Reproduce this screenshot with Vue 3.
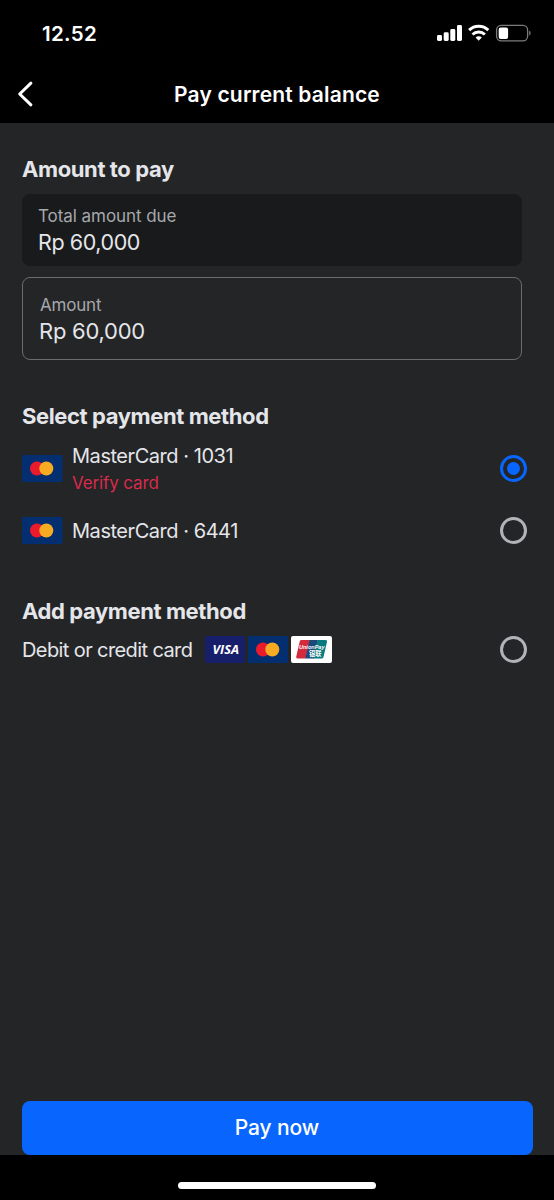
<script setup>
import { ref } from 'vue'

const selected = ref('1031')
const cards = [
  { id: '1031', label: 'MasterCard · 1031', note: 'Verify card' },
  { id: '6441', label: 'MasterCard · 6441', note: '' },
]
</script>

<template>
  <div class="screen">
    <header class="top">
      <div class="status">
        <span class="clock">12.52</span>
        <svg class="status-icons" width="96" height="20" viewBox="0 0 96 20">
          <g fill="#fff">
            <rect x="1" y="11" width="5" height="6" rx="1.4" />
            <rect x="7.7" y="8.3" width="5" height="8.7" rx="1.4" />
            <rect x="14.3" y="5" width="5" height="12" rx="1.4" />
            <rect x="21" y="1" width="5" height="16" rx="1.4" />
            <path d="M42.7 16.7l-3.1-3.1a4.4 4.4 0 0 1 6.2 0z" />
          </g>
          <g fill="none" stroke="#fff" stroke-width="3">
            <path d="M33.1 6.2a13.9 13.9 0 0 1 19.2 0" />
            <path d="M36.5 10.5a9 9 0 0 1 12.4 0" />
          </g>
          <rect x="60.6" y="1.4" width="31" height="15.4" rx="4.6" fill="none" stroke="#7b7b7b" stroke-width="1.3" />
          <rect x="62.7" y="3.4" width="9.4" height="11.5" rx="2" fill="#fff" />
          <path d="M93.2 6.5a3 3 0 0 1 0 5.2z" fill="#7b7b7b" />
        </svg>
      </div>
      <div class="nav">
        <svg class="back" width="20" height="30" viewBox="0 0 20 30">
          <path d="M16.9 3.2L5.7 14L16.9 24.8" fill="none" stroke="#fff" stroke-width="3" stroke-linecap="round" stroke-linejoin="round" />
        </svg>
        <h1 class="title">Pay current balance</h1>
      </div>
    </header>

    <main class="content">
      <h2>Amount to pay</h2>
      <div class="due">
        <div class="label">Total amount due</div>
        <div class="value">Rp 60,000</div>
      </div>
      <div class="field">
        <div class="label">Amount</div>
        <div class="value">Rp 60,000</div>
      </div>

      <h2 class="select-heading">Select payment method</h2>
      <div v-for="c in cards" :key="c.id" class="method" :class="{ noted: c.note }" @click="selected = c.id">
        <svg class="card" width="41" height="27" viewBox="0 0 41 27">
          <rect width="40.5" height="27" rx="1.5" fill="#032e70" />
          <circle cx="15" cy="13.5" r="7" fill="#eb1a2d" />
          <circle cx="24.3" cy="13.5" r="7" fill="#f6ab20" />
        </svg>
        <div class="names">
          <div class="name">{{ c.label }}</div>
          <div v-if="c.note" class="note">{{ c.note }}</div>
        </div>
        <span class="radio" :class="{ on: selected === c.id }"></span>
      </div>

      <h2 class="add-heading">Add payment method</h2>
      <div class="add" @click="selected = 'new'">
        <span class="name debit">Debit or credit card</span>
        <div class="brands">
          <svg width="40" height="27" viewBox="0 0 40 27">
            <rect width="40" height="27" rx="1.5" fill="#171f6b" />
            <text x="7.5" y="17.7" class="visa" textLength="26.5" lengthAdjust="spacingAndGlyphs">VISA</text>
          </svg>
          <svg width="40" height="27" viewBox="0 0 40 27">
            <rect width="40" height="27" rx="1.5" fill="#032e70" />
            <circle cx="15" cy="13.5" r="7" fill="#eb1a2d" />
            <circle cx="24.3" cy="13.5" r="7" fill="#f6ab20" />
          </svg>
          <svg width="41" height="27" viewBox="0 0 41 27">
            <rect width="41" height="27" rx="2" fill="#fff" />
            <path d="M10.5 4H19L14.5 22.5H6.5Q4.8 22.5 5.2 20.8L8.7 5.4Q9 4 10.5 4z" fill="#d42b3c" />
            <path d="M18.5 4H27L22.8 22.5H14.2z" fill="#1b4a78" />
            <path d="M26.5 4H34.6Q36.5 4 36 5.8L32.5 21Q32.1 22.5 30.5 22.5H22.2z" fill="#087b80" />
            <text x="8" y="13.4" class="union" textLength="25.5" lengthAdjust="spacingAndGlyphs">UnionPay</text>
            <text x="18" y="20.4" class="cn" textLength="12.5" lengthAdjust="spacingAndGlyphs">银联</text>
          </svg>
        </div>
        <span class="radio" :class="{ on: selected === 'new' }"></span>
      </div>
    </main>

    <button class="pay">Pay now</button>
    <footer class="home"><div class="indicator"></div></footer>
  </div>
</template>

<style>
body { margin: 0; background: #242527; }
</style>

<style scoped>
.screen {
  width: 554px; height: 1200px; display: flex; flex-direction: column;
  background: #242527; color: #e5e6ea; overflow: hidden;
  font-family: Inter, "Liberation Sans", sans-serif;
}
.top { flex: none; height: 123px; background: #000; color: #fff; }
.status { display: flex; justify-content: space-between; align-items: center; height: 67px; padding: 0 22px 0 42px; box-sizing: border-box; }
.clock { font-size: 20.5px; font-weight: 600; line-height: 24px; letter-spacing: 0.3px; }
.status-icons { display: block; }
.nav { display: grid; grid-template-columns: 40px 1fr 40px; align-items: center; height: 55px; padding: 0 14px; }
.title { margin: 0; text-align: center; font-size: 21px; line-height: 28px; font-weight: 600; letter-spacing: 0.17px; }
.content { flex: 1; min-height: 0; padding: 31px 22px 0; overflow: hidden; }
h2 { margin: 0; font-size: 22px; line-height: 30px; font-weight: 700; letter-spacing: -0.4px; }
.due { box-sizing: border-box; width: 500px; height: 72px; margin-top: 10px; padding: 10px 16px; border-radius: 8px; background: #191a1c; }
.field { box-sizing: border-box; width: 500px; height: 83px; margin-top: 11px; padding: 15px 16px; border: 1.5px solid #6b6c6e; border-radius: 8px; }
.label { font-size: 17px; line-height: 24px; letter-spacing: -0.06px; color: #a6a8ac; }
.value { font-size: 21.5px; line-height: 28px; letter-spacing: -0.42px; }
.field .label { padding-left: 1px; letter-spacing: -0.2px; }
.field .value { font-size: 22px; letter-spacing: -0.25px; }
.select-heading { margin-top: 41px; }
.method { display: flex; align-items: center; height: 53px; }
.method.noted { height: 73px; padding-top: 2px; box-sizing: border-box; }
.names { flex: 1; margin-left: 9px; }
.method.noted .names { padding-top: 2px; }
.name { font-size: 20px; line-height: 28px; letter-spacing: -0.46px; }
.name.debit { letter-spacing: -0.6px; }
.note { font-size: 17px; line-height: 27px; letter-spacing: -0.12px; color: #d82b4b; }
.radio { box-sizing: border-box; width: 27px; height: 27px; margin-right: 5px; border: 3px solid #b1b3b6; border-radius: 50%; display: grid; place-items: center; }
.radio.on { border-color: #0866ff; }
.radio.on::after { content: ""; width: 13px; height: 13px; border-radius: 50%; background: #0866ff; }
.add-heading { margin-top: 39px; }
.add { display: flex; align-items: center; height: 47px; }
.brands { display: flex; gap: 3px; flex: 1; margin-left: 12.5px; }
.visa { font: italic 700 12.5px "Open Sans", sans-serif; fill: #fff; }
.union { font: italic 700 6.2px "Liberation Sans", sans-serif; fill: #fff; }
.cn { font: 700 6.3px "Noto Sans CJK SC", sans-serif; fill: #fff; }
.pay { flex: none; height: 54px; margin: 0 21.5px; border: 0; border-radius: 8px; background: #0866ff; color: #fff; font: 500 21px/28px Inter, sans-serif; letter-spacing: -0.1px; }
.home { flex: none; height: 45px; background: #000; display: flex; justify-content: center; align-items: flex-end; }
.indicator { width: 198px; height: 7px; margin-bottom: 11px; border-radius: 4px; background: #fff; }
</style>
